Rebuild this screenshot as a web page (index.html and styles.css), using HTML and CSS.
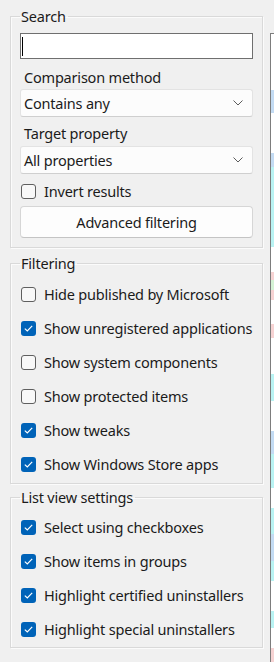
FILE: index.html
```html
<!DOCTYPE html>
<html lang="en">
<head>
<meta charset="utf-8">
<link rel="stylesheet" href="styles.css">
</head>
<body>
<div class="panel">
  <fieldset class="group group-search">
    <legend>Search</legend>
    <div class="textbox"><span class="caret"></span></div>
    <div class="label label-first">Comparison method</div>
    <div class="dropdown dropdown-first">
      <span>Contains any</span>
      <svg class="chev" width="10" height="6" viewBox="0 0 10 6"><path d="M0.5 0.5 L5 5 L9.5 0.5" fill="none" stroke="#5c5c5c" stroke-width="1"/></svg>
    </div>
    <div class="label label-second">Target property</div>
    <div class="dropdown dropdown-second">
      <span>All properties</span>
      <svg class="chev" width="10" height="6" viewBox="0 0 10 6"><path d="M0.5 0.5 L5 5 L9.5 0.5" fill="none" stroke="#5c5c5c" stroke-width="1"/></svg>
    </div>
    <div class="check-row check-row-small">
      <span class="box"></span><span>Invert results</span>
    </div>
    <div class="button">Advanced filtering</div>
  </fieldset>

  <fieldset class="group group-filter">
    <legend>Filtering</legend>
    <div class="check-row"><span class="box"></span><span>Hide published by Microsoft</span></div>
    <div class="check-row"><span class="box checked"><svg width="15" height="15" viewBox="0 0 15 15"><path d="M3.8 7.6 L6.3 10 L11.2 4.9" fill="none" stroke="#fff" stroke-width="1.2"/></svg></span><span>Show unregistered applications</span></div>
    <div class="check-row"><span class="box"></span><span>Show system components</span></div>
    <div class="check-row"><span class="box"></span><span>Show protected items</span></div>
    <div class="check-row"><span class="box checked"><svg width="15" height="15" viewBox="0 0 15 15"><path d="M3.8 7.6 L6.3 10 L11.2 4.9" fill="none" stroke="#fff" stroke-width="1.2"/></svg></span><span>Show tweaks</span></div>
    <div class="check-row"><span class="box checked"><svg width="15" height="15" viewBox="0 0 15 15"><path d="M3.8 7.6 L6.3 10 L11.2 4.9" fill="none" stroke="#fff" stroke-width="1.2"/></svg></span><span>Show Windows Store apps</span></div>
  </fieldset>

  <fieldset class="group group-list">
    <legend>List view settings</legend>
    <div class="check-row"><span class="box checked"><svg width="15" height="15" viewBox="0 0 15 15"><path d="M3.8 7.6 L6.3 10 L11.2 4.9" fill="none" stroke="#fff" stroke-width="1.2"/></svg></span><span>Select using checkboxes</span></div>
    <div class="check-row"><span class="box checked"><svg width="15" height="15" viewBox="0 0 15 15"><path d="M3.8 7.6 L6.3 10 L11.2 4.9" fill="none" stroke="#fff" stroke-width="1.2"/></svg></span><span>Show items in groups</span></div>
    <div class="check-row"><span class="box checked"><svg width="15" height="15" viewBox="0 0 15 15"><path d="M3.8 7.6 L6.3 10 L11.2 4.9" fill="none" stroke="#fff" stroke-width="1.2"/></svg></span><span>Highlight certified uninstallers</span></div>
    <div class="check-row"><span class="box checked"><svg width="15" height="15" viewBox="0 0 15 15"><path d="M3.8 7.6 L6.3 10 L11.2 4.9" fill="none" stroke="#fff" stroke-width="1.2"/></svg></span><span>Highlight special uninstallers</span></div>
  </fieldset>
</div>
<div class="list"></div>
</body>
</html>
```

FILE: styles.css
```css
html, body {
  margin: 0;
  padding: 0;
  height: 100%;
  overflow: hidden;
}
body {
  background: #f0f0f0;
  display: flex;
  font-family: "Noto Sans", "DejaVu Sans", sans-serif;
  font-size: 14.5px;
  letter-spacing: -0.2px;
  color: #1b1b1b;
}
.panel {
  width: 253px;
  margin-left: 10px;
  padding-top: 6px;
  flex: none;
}
.group {
  margin: 0;
  border: 1px solid #d9d9d9;
  box-shadow: inset 1px 1px 0 #fbfbfb, 1px 1px 0 #fbfbfb;
  padding: 0 9px;
  min-inline-size: 0;
}
.group legend {
  padding: 0 2px 0 1px;
  line-height: 20px;
  height: 20px;
}
.group-search { padding-top: 7px; padding-bottom: 9px; }
.group-filter { margin-top: 5px; padding-top: 4px; padding-bottom: 2px; }
.group-list { margin-top: 3px; padding-top: 3px; padding-bottom: 1px; }

.textbox {
  height: 26px;
  box-sizing: border-box;
  border: 1px solid #6f6f6f;
  background: #fff;
  display: flex;
  align-items: center;
  padding-left: 1px;
}
.caret {
  width: 1px;
  height: 19px;
  background: #000;
}
.label {
  height: 20px;
  line-height: 20px;
  padding-left: 4px;
}
.label-first { margin-top: 8px; }
.label-second { margin-top: 6px; }
.dropdown {
  height: 28px;
  box-sizing: border-box;
  border: 1px solid #e3e3e3;
  border-bottom-color: #cfcfcf;
  border-radius: 3px;
  background: #fcfcfc;
  display: flex;
  align-items: center;
  justify-content: space-between;
  padding: 0 9px 0 3px;
}
.dropdown-first { margin-top: 2px; }
.dropdown-second { margin-top: 3px; }
.chev { display: block; }

.check-row {
  height: 34px;
  display: flex;
  align-items: center;
  gap: 8px;
  padding-left: 1px;
  white-space: nowrap;
}
.check-row-small {
  height: 22px;
  margin-top: 6px;
}
.box {
  width: 15px;
  height: 15px;
  box-sizing: border-box;
  border: 1px solid #5f5f5f;
  border-radius: 3px;
  background: #f8f8f8;
  flex: none;
  display: flex;
}
.box.checked {
  border: none;
  background: #0063b8;
}
.box svg { display: block; }

.button {
  margin-top: 4px;
  height: 32px;
  box-sizing: border-box;
  border: 1px solid #d6d6d6;
  border-bottom-color: #c4c4c4;
  border-radius: 4px;
  background: #fdfdfd;
  display: flex;
  align-items: center;
  justify-content: center;
}

.list {
  flex: 1;
  margin-left: 7px;
  margin-top: 33px;
  border-top: 1px solid #7d7d7d;
  border-left: 1px solid #7d7d7d;
  background: linear-gradient(to bottom,
    #ffffff 0, #ffffff 56px,
    #c3dbf3 56px, #c3dbf3 79px,
    #ffffff 79px, #ffffff 119px,
    #c3dbf3 119px, #c3dbf3 133px,
    #b9f3f3 133px, #b9f3f3 213px,
    #ffffff 213px, #ffffff 238px,
    #f6d3d3 238px, #f6d3d3 246px,
    #d5f2d5 246px, #d5f2d5 256px,
    #f6d3d3 256px, #f6d3d3 266px,
    #ffffff 266px, #ffffff 290px,
    #f6d3d3 290px, #f6d3d3 304px,
    #ffffff 304px, #ffffff 340px,
    #b9f3f3 340px, #b9f3f3 367px,
    #ffffff 367px, #ffffff 397px,
    #c3dbf3 397px, #c3dbf3 420px,
    #b9f3f3 420px, #b9f3f3 454px,
    #ffffff 454px, #ffffff 474px,
    #b9f3f3 474px, #b9f3f3 500px,
    #c3dbf3 500px, #c3dbf3 527px,
    #b9f3f3 527px, #b9f3f3 547px,
    #ffffff 547px, #ffffff 577px,
    #b9f3f3 577px, #b9f3f3 594px,
    #ffffff 594px, #ffffff 614px,
    #f6d3d3 614px, #f6d3d3 640px);
}
```
